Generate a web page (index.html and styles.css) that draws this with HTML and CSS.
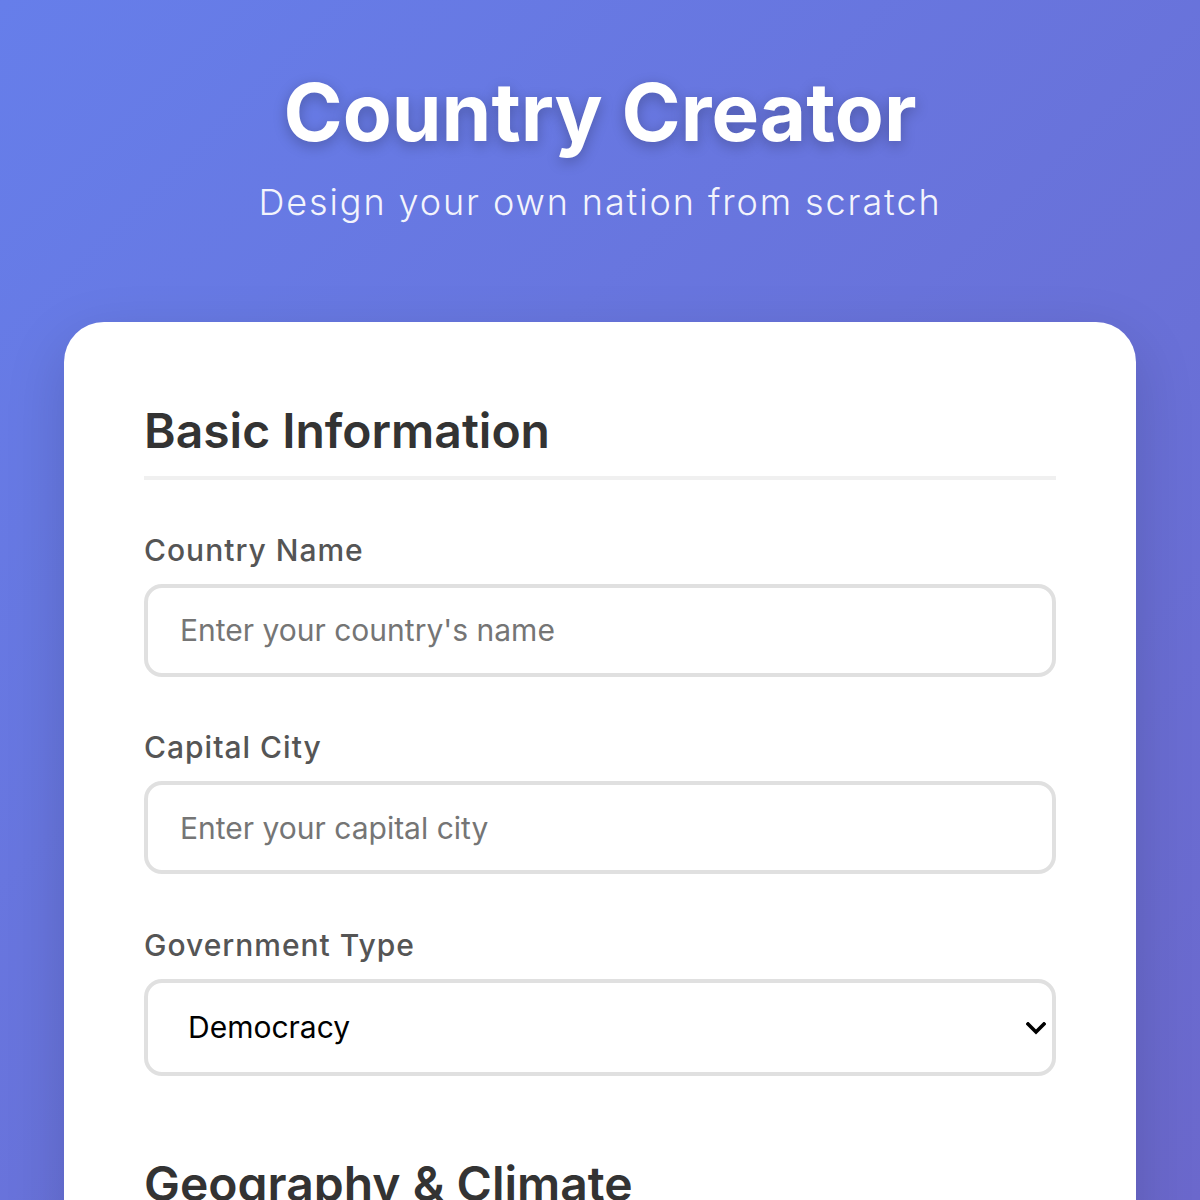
FILE: index.html
```html
<!DOCTYPE html>
<html lang="en">
<head>
<meta charset="utf-8">
<title>Country Creator</title>
<link rel="stylesheet" href="styles.css">
</head>
<body>
<div class="page">
  <header class="header">
    <h1 class="title">Country Creator</h1>
    <p class="subtitle">Design your own nation from scratch</p>
  </header>
  <main class="card">
    <section class="section">
      <h2 class="section-title">Basic Information</h2>
      <div class="form-group">
        <label class="label" for="country">Country Name</label>
        <input class="input" id="country" type="text" placeholder="Enter your country's name">
      </div>
      <div class="form-group">
        <label class="label" for="capital">Capital City</label>
        <input class="input" id="capital" type="text" placeholder="Enter your capital city">
      </div>
      <div class="form-group">
        <label class="label" for="gov">Government Type</label>
        <div class="select-wrap">
          <select class="input select" id="gov">
            <option>Democracy</option>
            <option>Monarchy</option>
            <option>Republic</option>
          </select>
          <svg class="chevron" width="20" height="13" viewBox="0 0 20 13" aria-hidden="true">
            <path d="M2 2 L10 10 L18 2" fill="none" stroke="#000" stroke-width="3.6" stroke-linecap="square"/>
          </svg>
        </div>
      </div>
    </section>
    <section class="section">
      <h2 class="section-title">Geography &amp; Climate</h2>
      <div class="form-group">
        <label class="label" for="continent">Continent</label>
        <input class="input" id="continent" type="text" placeholder="Enter your continent">
      </div>
    </section>
  </main>
</div>
</body>
</html>
```
FILE: styles.css
```css
* { box-sizing: border-box; }
html, body { margin: 0; padding: 0; }
body {
  font-family: Inter, "Liberation Sans", sans-serif;
  background: linear-gradient(135deg, #667eea 0%, #6b68cc 100%) fixed;
  min-height: 100vh;
}
.page {
  padding: 64px 64px 80px;
}
.header {
  text-align: center;
  color: #fff;
}
.title {
  margin: 0;
  font-size: 80px;
  font-weight: 700;
  line-height: 96px;
  text-shadow: 0 4px 14px rgba(0, 0, 0, 0.25);
}
.subtitle {
  margin: 21px 0 0;
  font-size: 36px;
  font-weight: 300;
  line-height: 43px;
  letter-spacing: 1.9px;
  opacity: 0.92;
}
.card {
  margin-top: 98px;
  background: #fff;
  border-radius: 40px;
  padding: 80px;
  box-shadow: 0 20px 60px rgba(0, 0, 0, 0.15);
  display: flex;
  flex-direction: column;
  gap: 27px;
}
.section-title {
  margin: 0 0 52px;
  font-size: 48px;
  font-weight: 600;
  line-height: 1.2;
  color: #333;
  padding-bottom: 16px;
  border-bottom: 4px solid #f0f0f0;
}
.form-group {
  margin-bottom: 52.5px;
}
.label {
  display: block;
  font-size: 30px;
  font-weight: 500;
  line-height: 36px;
  letter-spacing: 1px;
  color: #555;
  margin-bottom: 16px;
}
.input {
  display: block;
  width: 100%;
  height: 93px;
  padding: 0 32px;
  border: 4px solid #e0e0e0;
  border-radius: 18px;
  font-family: Inter, "Liberation Sans", sans-serif;
  font-size: 30px;
  color: #000;
  background: #fff;
  outline: none;
}
.input::placeholder {
  color: #757575;
}
.select-wrap {
  position: relative;
}
.select {
  height: 97px;
  padding-left: 40px;
  -webkit-appearance: none;
  appearance: none;
}
.chevron {
  position: absolute;
  right: 10px;
  top: 43px;
}
```
